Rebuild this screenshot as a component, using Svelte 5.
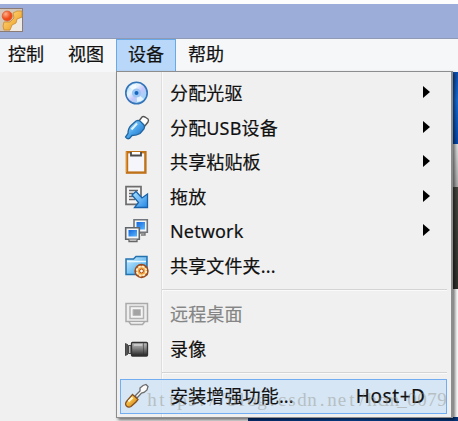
<script>
  const tabs = [
    { label: '控制', width: 58, pad: 7 },
    { label: '视图', width: 58, pad: 9 },
    { label: '设备', width: 60, pad: 11, active: true },
    { label: '帮助', width: 60, pad: 11 }
  ];
  const groups = [
    [
      { label: '分配光驱', icon: 'disc', more: true },
      { label: '分配USB设备', icon: 'usb', more: true },
      { label: '共享粘贴板', icon: 'clipboard', more: true },
      { label: '拖放', icon: 'drag', more: true },
      { label: 'Network', icon: 'network', more: true },
      { label: '共享文件夹...', icon: 'folder' }
    ],
    [
      { label: '远程桌面', icon: 'remote', disabled: true },
      { label: '录像', icon: 'camera' }
    ],
    [{ label: '安装增强功能...', icon: 'tool', shortcut: 'Host+D', selected: true }]
  ];
  const mark = 'https://blog.csdn.net/hcm_0079';
  const markX = [...mark].map((_, i) => i * 10 + 5).join(' ');
</script>

<div class="window">
  <header class="titlebar">
    <svg class="appicon" width="23" height="24" viewBox="0 0 23 24">
      <defs>
        <linearGradient id="gold" x1="0" y1="0" x2="1" y2="1"><stop stop-color="#ffe08a" /><stop offset="1" stop-color="#ee9514" /></linearGradient>
        <radialGradient id="ball" cx=".35" cy=".3"><stop stop-color="#ffb08a" /><stop offset="1" stop-color="#ee4a17" /></radialGradient>
      </defs>
      <rect x="-2" y=".5" width="24.5" height="23" fill="#d5c7b8" stroke="#8b7b72" />
      <path d="M10 23C10 16 15 10 22 10V23Z" fill="#eee9e2" />
      <path d="M22 3H17L13 5L14 10L10 14L4 14L3 18L4 22H10L12 17L16 15L17 11L22 9Z" fill="url(#gold)" stroke="#c98a2c" stroke-width=".8" />
      <circle cx="7.2" cy="8" r="5" fill="url(#ball)" stroke="#d45a32" stroke-width=".7" />
    </svg>
  </header>
  <nav class="menubar">
    {#each tabs as t}
      <div class="tab" class:active={t.active} style="width:{t.width}px;padding-left:{t.pad}px">{t.label}</div>
    {/each}
  </nav>
  <main class="body">
    <div class="guest">
      <div class="sky"></div>
      <div class="light"></div>
      <div class="dark"></div>
      <div class="pale"></div>
    </div>
    <div class="taskbar"></div>
  </main>

  <div class="menu">
    {#each groups as g, i}
      {#if i}<div class="sep"></div>{/if}
      {#each g as item}
        <div class="item" class:disabled={item.disabled} class:selected={item.selected}>
          <svg class="icon" width="26" height="26" viewBox="0 0 26 26">
            {#if item.icon === 'disc'}
              <defs><linearGradient id="cd" x1="0" y1="0" x2="1" y2="1"><stop stop-color="#8fd0fa" /><stop offset=".35" stop-color="#e9f5ff" /><stop offset=".55" stop-color="#c5c6fa" /><stop offset="1" stop-color="#7de0f4" /></linearGradient></defs>
              <circle cx="12.5" cy="13" r="10.7" fill="url(#cd)" stroke="#3474b8" stroke-width="1.6" />
              <path d="M12.5 13L5 7Q8 4 12 4ZM12.5 13L20 19Q17 22 13 22Z" fill="#f7fcff" opacity=".8" />
              <circle cx="12.5" cy="13" r="4.6" fill="#9cc7f4" />
              <circle cx="12.5" cy="13" r="2" fill="#1765bd" />
            {:else if item.icon === 'usb'}
              <defs><linearGradient id="ub" x1="0" y1="0" x2="1" y2="1"><stop stop-color="#c4e8ff" /><stop offset=".5" stop-color="#4aa5ec" /><stop offset="1" stop-color="#1561b8" /></linearGradient></defs>
              <path d="M15 6L18 2Q19 1 21 2L24 4Q25 5 24 7L20.500 11.500Z" fill="#fff" stroke="#555" stroke-width="1.4" />
              <path d="M12 6Q14 5 16 6L20 10Q21 12 20 14L16 18.500Q13 20.500 8 20.500L5.500 23.500Q3 24.500 1.500 22L4 18.500Q4 13.500 7 10.500Z" fill="url(#ub)" stroke="#20649f" stroke-width="1.3" />
              <path d="M7.500 14.500L13 8.500" stroke="#e0f4ff" stroke-width="2" />
            {:else if item.icon === 'clipboard'}
              <rect x="3" y="3.2" width="18.4" height="20.4" fill="#f5f6fb" stroke="#c07218" stroke-width="2.4" />
              <path d="M2.300 2.500V23" stroke="#e79a35" stroke-width="1" />
              <path d="M7 3V6.5H17V3" fill="#fff" stroke="#4b4b4b" stroke-width="1.8" />
            {:else if item.icon === 'drag'}
              <defs><linearGradient id="ar" x1="0" y1="0" x2="1" y2="1"><stop stop-color="#b4e6ff" /><stop offset="1" stop-color="#2387e6" /></linearGradient></defs>
              <path d="M2 2.700H17V20.300H2Z" fill="#f4f4f4" stroke="#6d6d6d" stroke-width="1.7" />
              <path d="M5 6.5H14M5 9.5H9M5 12.5H9M5 15.5H11" stroke="#666" stroke-width="1.500" />
              <path d="M8 11L12 7.5L18 14L23.5 10V23.5H10.5L14.5 18.5Z" fill="url(#ar)" stroke="#1762aa" stroke-width="1.300" />
            {:else if item.icon === 'network'}
              <defs><linearGradient id="sc" x1="0" y1="0" x2="1" y2="1"><stop stop-color="#1265dc" /><stop offset="1" stop-color="#5ab7ff" /></linearGradient></defs>
              <path d="M10 1.700H23.300V14.300H10Z" fill="#f5f5f5" stroke="#70767c" stroke-width="1.600" />
              <path d="M12.500 4H21V11.500H12.500Z" fill="url(#sc)" /><path d="M15 15H21V17H17" fill="none" stroke="#777" stroke-width="1.400" />
              <path d="M1.700 9.700H15.300V21.300H1.700Z" fill="#f5f5f5" stroke="#5f656a" stroke-width="1.600" />
              <path d="M4.500 12H13V18.500H4.500Z" fill="url(#sc)" /><path d="M5 21.500V23.500H13V21.500" fill="#ddd" stroke="#666" stroke-width="1.300" />
            {:else if item.icon === 'folder'}
              <defs><linearGradient id="fo" x1="0" y1="0" x2="1" y2="1"><stop stop-color="#d4f1ff" /><stop offset="1" stop-color="#2c9be8" /></linearGradient></defs>
              <path d="M2 6H9.500L12 3.500H23V21.500H2Z" fill="url(#fo)" stroke="#2472ae" stroke-width="1.500" />
              <path d="M3 8.500H22" stroke="#e9f9ff" stroke-width="1.500" />
              <circle cx="17.500" cy="18" r="6.200" fill="#ffc878" stroke="#9c4a1c" stroke-width="2" />
              <circle cx="17.500" cy="18" r="4.700" fill="none" stroke="#fff0cf" stroke-width="1.900" stroke-dasharray="2.200 1.500" />
              <circle cx="17.500" cy="18" r="3.500" fill="#f2a040" />
              <circle cx="17.500" cy="18" r="1.900" fill="#fff" stroke="#a94e16" />
            {:else if item.icon === 'remote'}
              <path d="M2 2.500H23.500V20.500H2Z" fill="#eee" stroke="#aaa" stroke-width="1.500" />
              <path d="M6 5.500H19.500V17.500H6Z" fill="#f4f4f4" stroke="#b2b2b2" stroke-width="1.500" />
              <path d="M9 8.500H16.500V14.500H9Z" fill="#a4a4a4" stroke="#bbb" stroke-width="1" />
              <path d="M5 21L7 23.500H18.500L20.500 21" fill="#eee" stroke="#aaa" stroke-width="1.500" />
            {:else if item.icon === 'camera'}
              <defs><linearGradient id="ca" x2="0" y2="1"><stop stop-color="#c5c5c5" /><stop offset=".4" stop-color="#8a8a8a" /><stop offset="1" stop-color="#222" /></linearGradient></defs>
              <path d="M1.500 7.500L4 9V18L1.500 19.500Z" fill="#555" stroke="#444" />
              <path d="M4.500 9.500H7V17.500H4.500Z" fill="#bbb" stroke="#444" />
              <rect x="7.500" y="6.500" width="16" height="13.500" rx="1" fill="url(#ca)" stroke="#333" stroke-width="1.300" />
              <path d="M19.500 7V19.500" stroke="#3338" /><path d="M10 9H18" stroke="#e3e3e3" />
            {:else}
              <defs><linearGradient id="ha" x1="0" y1="0" x2="1" y2="1"><stop stop-color="#fff0a5" /><stop offset=".5" stop-color="#f1b33a" /><stop offset="1" stop-color="#b86b12" /></linearGradient></defs>
              <path d="M11 13L16 8L16 5L19 2.500L22 1.500L24 3.500L23 7L20 9.500L17.500 10L13 15Z" fill="#fafafa" stroke="#6b6b6b" stroke-width="1.300" />
              <path d="M8.500 11.500L14 16.500L12 19L7 23.500Q4.500 25 2.500 23Q.700 21 2.500 18.500Z" fill="url(#ha)" stroke="#855020" stroke-width="1.300" />
              <path d="M4.500 18.500L8.500 14.500" stroke="#fff9d9" stroke-width="2" />
            {/if}
          </svg>
          <span class="label">{item.label}</span>
          {#if item.more}<svg class="arrow" width="7" height="12" viewBox="0 0 7 12"><path d="M0 0L7 6L0 12Z" fill="#000" /></svg>{/if}
          {#if item.shortcut}<span class="key">{item.shortcut}</span>{/if}
        </div>
      {/each}
    {/each}
  </div>
  <svg class="watermark" width="310" height="24"><text x={markX} y="16">{mark}</text></svg>
</div>

<style>
  .window { position: relative; width: 458px; height: 421px; overflow: hidden; background: #f0f0f0; display: flex; flex-direction: column; font-family: "Noto Sans", "Noto Sans CJK SC", sans-serif; color: #111; -webkit-text-stroke: .2px; }
  .titlebar { box-sizing: border-box; height: 39px; flex: none; border-top: 4px solid #fdfdfe; border-bottom: 1px solid #909ab5; background: #9dadda; padding-top: 4px; }
  .appicon { display: block; }
  .menubar { height: 33px; flex: none; display: flex; background: #f5f7f9; }
  .tab { box-sizing: border-box; font: 18px/27px "Noto Sans CJK SC", sans-serif; white-space: nowrap; border: 1px solid transparent; }
  .tab.active { background: #b9d8f9; border: 1px solid #68a9e8; }
  .body { flex: 1; display: flex; flex-direction: column; align-items: flex-end; }
  .guest { flex: 1; width: 8px; display: flex; flex-direction: column; }
  .sky { height: 72px; background: linear-gradient(#0d4fb0, #176ad5 40%, #0647aa); }
  .light { height: 43px; background: linear-gradient(#ddd, #aaa); }
  .dark { height: 102px; background: linear-gradient(#45453f, #30312d); }
  .pale { flex: 1; background: #fafafa; }
  .taskbar { height: 4px; width: 210px; background: linear-gradient(90deg, #06327b, #0b479b 50%, #06367d); }
  .menu { position: absolute; left: 116px; top: 71px; box-sizing: border-box; width: 337px; height: 347px; padding: 4px 4px 3px 3px; border: 1px solid #8d8d8d; border-right-width: 2px; background: linear-gradient(90deg, transparent 44px, #dedede 44px, #dedede 45px, #fafafa 45px, #fafafa 46px, transparent 46px), #f0f0f0; box-shadow: 2px 2px 3px #0008; display: flex; flex-direction: column; }
  .item { flex: none; box-sizing: border-box; height: 34.5px; display: flex; align-items: center; padding: 0 21px 0 3px; border: 1px solid transparent; font-size: 18px; line-height: 30px; white-space: nowrap; }
  .item.selected { background: #d0e4f6cc; border-color: #71adf0; margin-top: -1px; }
  .icon { flex: none; margin-right: 20px; }
  .label { flex: 1; letter-spacing: .15px; }
  .key { font-size: 19px; letter-spacing: .6px; margin-right: -.6px; }
  .disabled { color: #858585; }
  .arrow { margin: -2px -5px 0 0; }
  .sep { flex: none; height: 1px; margin: 6px 0 6px 42px; background: #d4d4d4; border-bottom: 1px solid #fafafa; }
  .watermark { position: absolute; left: 147px; top: 390px; overflow: visible; font-family: "Liberation Serif", serif; font-size: 19px; fill: #8d8a7c; opacity: .42; text-anchor: middle; -webkit-text-stroke: 0; }
</style>
